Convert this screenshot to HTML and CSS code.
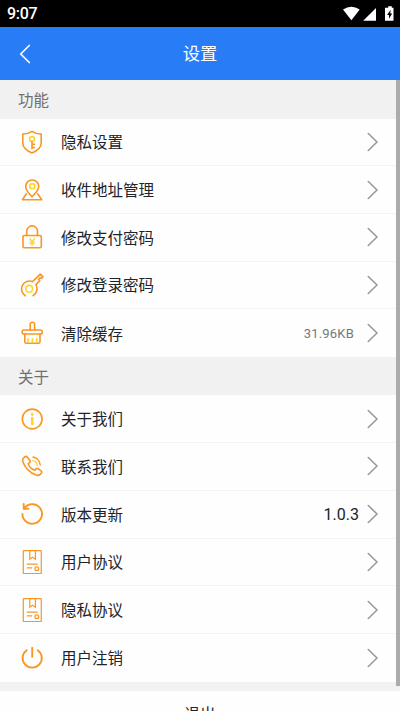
FILE: index.html
```html
<!DOCTYPE html>
<html lang="zh-CN">
<head>
<meta charset="utf-8">
<title>设置</title>
<link rel="stylesheet" href="styles.css">
</head>
<body>
<svg class="defs" aria-hidden="true">
  <symbol id="chevron" viewBox="0 0 12 20"><path d="M1.3 1.5 10 10 1.3 18.500"/></symbol>
  <symbol id="document" viewBox="0 0 24 24"><g stroke-width="1.2"><rect x="3.300" y=".7" width="18" height="22.800" rx=".6"/><path d="M9.800.8v8.500l2.800-2.200 2.800 2.200V.8M7.300 14.200h10M7.300 17.800h4.500"/><circle cx="16.800" cy="18.800" r="1.900"/></g></symbol>
</svg>
<div class="screen">
  <div class="status">
    <span class="time">9:07</span>
    <svg class="signals" viewBox="0 0 52 16">
      <path d="M0 3.500Q8.300-2 16.700 3.500L8.400 14.200Z"/>
      <path d="M33 2v12.800H20.200Z"/>
      <path d="M43.500 1.800h1.700V.2h3.600v1.600h1.700v13h-8.500v-13Z"/>
      <path class="bolt" d="M47.700 3.800 44 9h2v3.700L49.200 7.500h-2Z"/>
    </svg>
  </div>
  <header class="header">
    <svg class="back" viewBox="0 0 12 20"><path d="M10.300 1.500 1.700 10l8.600 8.500"/></svg>
    <h1>设置</h1>
  </header>
  <main class="content">
    <h2>功能</h2>
    <ul>
      <li>
        <svg class="icon" viewBox="0 0 24 24"><path d="M12 1.300C9 3.300 6 4 2.800 4v9c0 4.500 4 7.800 9.200 10 5.200-2.200 9.200-5.500 9.200-10V4C18 4 15 3.300 12 1.300Z"/><circle class="light" cx="12" cy="9" r="2.400"/><path d="M12 11.500v7.300M12 14.300h2.500M12 17.500h2.500"/></svg>
        <span class="label">隐私设置</span><svg class="arrow"><use href="#chevron"/></svg>
      </li>
      <li>
        <svg class="icon" viewBox="0 0 24 24"><path d="M12 18.800C8.500 15.200 5.700 12 5.700 8.500a6.500 6.500 0 0 1 13 0c0 3.500-3 6.700-6.700 10.300ZM6.300 15.800 2.500 21.700h19.300l-4.200-5.900"/><circle class="light" cx="12.300" cy="8.300" r="2.500"/></svg>
        <span class="label">收件地址管理</span><svg class="arrow"><use href="#chevron"/></svg>
      </li>
      <li>
        <svg class="icon" viewBox="0 0 24 24"><rect x="3" y="10.500" width="18.300" height="12.300" rx="1.300"/><path d="M6.700 10.500V6.300a5.400 5.400 0 0 1 10.800 0v4.200"/><path class="light thin" d="m9.900 13.800 2.300 2.700 2.300-2.700M10 16.800h4.400M10 18.600h4.400M12.200 16.500v3.700"/></svg>
        <span class="label">修改支付密码</span><svg class="arrow"><use href="#chevron"/></svg>
      </li>
      <li>
        <svg class="icon" viewBox="0 0 24 24"><path d="M5.300 22.800A8 8 0 0 1 12.500 8.600L20.300 1.200 23 3.600l-1.700 1.900-1.200-.8-1.500 1.600 1.100 1.300-3.800 4.100a8 8 0 0 1-2.800 11"/><circle class="light" cx="9.200" cy="15.800" r="3.400"/></svg>
        <span class="label">修改登录密码</span><svg class="arrow"><use href="#chevron"/></svg>
      </li>
      <li>
        <svg class="icon" viewBox="0 0 24 24"><path d="M10.200 9V3.500a2.200 2.200 0 0 1 4.400 0V9M4.800 13v7.700q0 1.500 1.500 1.500h12.200q1.500 0 1.500-1.500V13"/><rect x="2.200" y="9" width="20" height="4" rx="1.800"/><path class="light" d="M8 21v-3.300M12.400 21v-3.300M16.700 21v-3.300"/></svg>
        <span class="label">清除缓存</span><span class="size">31.96KB</span><svg class="arrow"><use href="#chevron"/></svg>
      </li>
    </ul>
    <h2>关于</h2>
    <ul>
      <li>
        <svg class="icon" viewBox="0 0 24 24"><circle cx="12.200" cy="12" r="9.900"/><path class="light info" d="M12.200 7v.6M12.200 11v6"/></svg>
        <span class="label">关于我们</span><svg class="arrow"><use href="#chevron"/></svg>
      </li>
      <li>
        <svg class="icon" viewBox="0 0 24 24"><path d="m4 3.500 1.500-1q.8-.5 1.500.3l3 3.900q.6.900-.2 1.600L8.300 9.600q.4 2.200 2.300 4.100 1.800 1.800 4.200 2.400l1.400-1.500q.8-.7 1.600-.1l3.500 2.700q.9.700.2 1.600l-1.300 1.600q-1.400 1.500-3.700.8Q6 17.300 2.800 7.500 2.200 5 4 3.500Z"/><path class="light thin" d="M12.800 6.700a5.500 5.500 0 0 1 4.500 5"/><path class="thin" d="M13 3a8.800 8.800 0 0 1 7.200 8"/></svg>
        <span class="label">联系我们</span><svg class="arrow"><use href="#chevron"/></svg>
      </li>
      <li>
        <svg class="icon" viewBox="0 0 24 24"><path class="power" d="M2.400 12a9.800 9.800 0 1 0 2.800-6.900M3.700 2v4.700h4.700"/></svg>
        <span class="label">版本更新</span><span class="version">1.0.3</span><svg class="arrow"><use href="#chevron"/></svg>
      </li>
      <li>
        <svg class="icon"><use href="#document"/></svg>
        <span class="label">用户协议</span><svg class="arrow"><use href="#chevron"/></svg>
      </li>
      <li>
        <svg class="icon"><use href="#document"/></svg>
        <span class="label">隐私协议</span><svg class="arrow"><use href="#chevron"/></svg>
      </li>
      <li>
        <svg class="icon" viewBox="0 0 24 24"><path class="power" d="M12.200 1.800v9M6.700 4.200a9.600 9.600 0 1 0 11 0"/></svg>
        <span class="label">用户注销</span><svg class="arrow"><use href="#chevron"/></svg>
      </li>
    </ul>
    <div class="gap"></div>
    <div class="logout">退出</div>
  </main>
  <div class="scrollbar"></div>
</div>
</body>
</html>
```
FILE: styles.css
```css
* { box-sizing: border-box; }
body { margin: 0; font-family: Roboto, "Noto Sans CJK SC", sans-serif; }
h1, h2, ul { margin: 0; padding: 0; font-weight: 400; list-style: none; }
svg { display: block; flex: none; fill: none; stroke-linecap: round; stroke-linejoin: round; }
.defs { position: absolute; width: 0; height: 0; }
.screen { position: relative; height: 711px; overflow: hidden; background: #fefefe; }
.status {
  display: flex; align-items: center; justify-content: space-between;
  height: 27px; padding: 0 5px 0 7px; background: #000; color: #fff;
}
.time { font-size: 16px; font-weight: 500; line-height: 27px; letter-spacing: -.3px; }
.signals { width: 52px; height: 16px; fill: #fff; }
.signals .bolt { fill: #000; }
.header {
  display: grid; grid-template-columns: 60px 1fr 60px; align-items: center;
  height: 53px; background: #287df6; color: #fff;
}
.header h1 { font-size: 17.3px; line-height: 26px; text-align: center; }
.back { width: 12px; height: 20px; margin-left: 19px; stroke: #fff; stroke-width: 1.7; }
h2 {
  height: 38.500px; padding-left: 18px; background: #f1f1f1;
  color: #707070; font-size: 15.500px; line-height: 42px;
}
li {
  display: flex; align-items: center; height: 47.700px;
  padding: 0 21px 0 20px; border-bottom: 1px solid #f4f4f4;
}
li:last-child { border-bottom: 0; }
.icon { width: 24px; height: 24px; margin-right: 17px; stroke: #fa9623; stroke-width: 1.6; }
.icon .light { stroke: #fbd52b; }
.icon .thin { stroke-width: 1.3; }
.icon .info { stroke-width: 2.6; }
.icon .power { stroke-width: 1.9; }
.label { flex: 1; padding-bottom: 1px; color: #202329; font-size: 15.500px; }
.size { margin-right: 13px; color: #77777a; font-size: 13px; letter-spacing: .2px; }
.version { margin-right: 8px; color: #202329; font-size: 16px; padding-top: 1px; }
.arrow { width: 12px; height: 20px; stroke: #999; stroke-width: 1.6; }
.gap { height: 9px; background: #f1f2f2; }
.logout { height: 47.700px; color: #202329; font-size: 15.500px; line-height: 49px; text-align: center; }
.scrollbar { position: absolute; top: 80px; right: 0; width: 4px; height: 606px; background: #acacac; }
```
